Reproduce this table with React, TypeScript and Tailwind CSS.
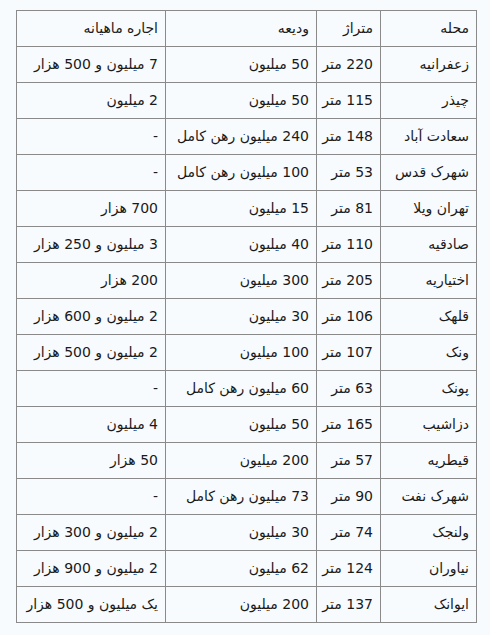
import React from "react";

const rows: string[][] = [
  ["محله", "متراژ", "ودیعه", "اجاره ماهیانه"],
  ["زعفرانیه", "220 متر", "50 میلیون", "7 میلیون و 500 هزار"],
  ["چیذر", "115 متر", "50 میلیون", "2 میلیون"],
  ["سعادت آباد", "148 متر", "240 میلیون رهن کامل", "-"],
  ["شهرک قدس", "53 متر", "100 میلیون رهن کامل", "-"],
  ["تهران ویلا", "81 متر", "15 میلیون", "700 هزار"],
  ["صادقیه", "110 متر", "40 میلیون", "3 میلیون و 250 هزار"],
  ["اختیاریه", "205 متر", "300 میلیون", "200 هزار"],
  ["قلهک", "106 متر", "30 میلیون", "2 میلیون و 600 هزار"],
  ["ونک", "107 متر", "100 میلیون", "2 میلیون و 500 هزار"],
  ["پونک", "63 متر", "60 میلیون رهن کامل", "-"],
  ["دزاشیب", "165 متر", "50 میلیون", "4 میلیون"],
  ["قیطریه", "57 متر", "200 میلیون", "50 هزار"],
  ["شهرک نفت", "90 متر", "73 میلیون رهن کامل", "-"],
  ["ولنجک", "74 متر", "30 میلیون", "2 میلیون و 300 هزار"],
  ["نیاوران", "124 متر", "62 میلیون", "2 میلیون و 900 هزار"],
  ["ایوانک", "137 متر", "200 میلیون", "یک میلیون و 500 هزار"],
];

export default function App() {
  return (
    <div
      className="min-h-screen bg-[#f8fbfe] pt-[10px] pl-[16px]"
      style={{ fontFamily: '"DejaVu Sans", Tahoma, sans-serif' }}
    >
      <div
        dir="rtl"
        className="grid w-[461px] grid-cols-[96px_64px_151px_149px] border-t border-r border-[#8a8a8a] text-[14px] text-[#1a1a1a]"
      >
        {rows.map((r, i) =>
          r.map((c, j) => (
            <div
              key={`${i}-${j}`}
              className="flex h-[36px] items-center border-b border-l border-[#8a8a8a] pr-[7px] whitespace-nowrap"
            >
              {c}
            </div>
          ))
        )}
      </div>
    </div>
  );
}
